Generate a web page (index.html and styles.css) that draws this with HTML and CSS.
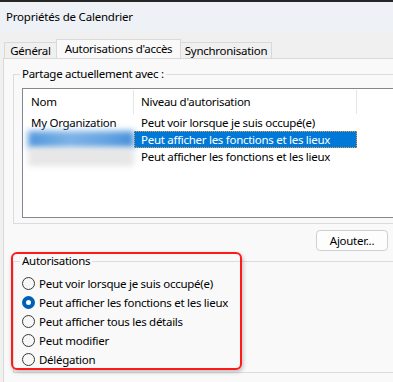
FILE: index.html
```html
<!DOCTYPE html>
<html>
	<head>
		<meta charset="utf-8"/>
		<title>Propriétés de Calendrier</title>
		<link rel="stylesheet" href="styles.css">
	</head>
	<body>
		<div class="window">
			<div class="titlebar">Propriétés de Calendrier</div>
			<div class="dialog">
				<div class="tabs">
					<div class="tab tab-general">Général</div>
					<div class="tab tab-access active">Autorisations d'accès</div>
					<div class="tab tab-sync">Synchronisation</div>
				</div>
				<div class="panel">
					<fieldset class="group">
						<legend>Partage actuellement avec :</legend>
						<div class="list">
							<div class="row head">
								<div class="cell name">Nom</div>
								<div class="cell level">Niveau d'autorisation</div>
							</div>
							<div class="row">
								<div class="cell name">My Organization</div>
								<div class="cell level">Peut voir lorsque je suis occupé(e)</div>
							</div>
							<div class="row">
								<div class="cell name"><span class="blur blur-blue"></span></div>
								<div class="cell level selected">Peut afficher les fonctions et les lieux</div>
							</div>
							<div class="row">
								<div class="cell name"><span class="blur blur-gray"></span></div>
								<div class="cell level">Peut afficher les fonctions et les lieux</div>
							</div>
						</div>
					</fieldset>
					<div class="actions">
						<button>Ajouter...</button>
					</div>
					<fieldset class="group perms">
						<legend>Autorisations</legend>
						<label class="radio"><span class="dot"></span>Peut voir lorsque je suis occupé(e)</label>
						<label class="radio"><span class="dot checked"></span>Peut afficher les fonctions et les lieux</label>
						<label class="radio"><span class="dot"></span>Peut afficher tous les détails</label>
						<label class="radio"><span class="dot"></span>Peut modifier</label>
						<label class="radio"><span class="dot"></span>Délégation</label>
					</fieldset>
					<div class="highlight"></div>
				</div>
			</div>
		</div>
	</body>
</html>
```

FILE: styles.css
```css
html, body {
	margin: 0;
	padding: 0;
}
body {
	width: 393px;
	height: 382px;
	overflow: hidden;
	font-family: 'Noto Sans', 'Segoe UI', sans-serif;
	font-size: 11.5px;
	letter-spacing: -0.28px;
	color: #000;
	background: #f0f0f0;
}
.window {
	border-top: 2px solid #262626;
	width: 430px;
}
.titlebar {
	height: 29px;
	line-height: 30px;
	padding-left: 6px;
	background: #eef2f7;
	letter-spacing: -0.2px;
}
.dialog {
	background: #f0f0f0;
	padding-top: 8px;
	height: 400px;
}
.tabs {
	display: flex;
	align-items: flex-end;
	padding-left: 4px;
	height: 19px;
}
.tab {
	box-sizing: border-box;
	height: 16px;
	line-height: 15px;
	border: 1px solid #d9d9d9;
	border-bottom: none;
	text-align: center;
	background: #f0f0f0;
	white-space: nowrap;
}
.tab-general { width: 52px; border-right: none; }
.tab-access { width: 125px; }
.tab-sync { width: 91px; border-left: none; }
.tab.active {
	height: 20px;
	line-height: 17px;
	background: #f9f9f9;
	position: relative;
	margin-bottom: -1px;
}
.panel {
	position: relative;
	box-sizing: border-box;
	width: 412px;
	height: 340px;
	margin-left: 3px;
	padding: 0 9px;
	border: 1px solid #d9d9d9;
	background: #f9f9f9;
}
.group {
	margin: 7px 0 0;
	padding: 6px 8px 5px;
	border: 1px solid #dcdcdc;
	min-width: 0;
}
.group legend {
	padding: 0 2px;
	margin-left: -2px;
	line-height: 16px;
}
.list {
	height: 130px;
	box-sizing: border-box;
	border: 1px solid #828790;
	background: #fff;
}
.row {
	display: flex;
	height: 17px;
	line-height: 17px;
	white-space: nowrap;
}
.row.head {
	height: 25px;
	line-height: 25px;
}
.cell {
	box-sizing: border-box;
	position: relative;
}
.cell.name {
	width: 111px;
	padding-left: 8px;
}
.cell.level {
	width: 223px;
	padding-left: 7px;
}
.head .cell {
	border-right: 1px solid #e5e5e5;
	height: 24px;
	margin-top: 1px;
	line-height: 23px;
}
.selected {
	background: #0078d7;
	color: #fff;
	outline: 1px dotted #e8a040;
	outline-offset: -1px;
}
.blur {
	position: absolute;
	left: 5px;
	right: 0;
	top: 0;
	bottom: 0;
	filter: blur(3px);
}
.blur-blue {
	top: 0;
	background: linear-gradient(90deg, #5197dd, #7db3e6 40%, #64a3e1 75%, #4590da);
}
.blur-gray {
	top: 1px;
	background: linear-gradient(180deg, #dadada, #eeeeee 50%, #d8d8d8);
}
.actions {
	display: flex;
	justify-content: flex-end;
	padding-right: 17px;
	margin-top: 6px;
}
.actions button {
	width: 72px;
	height: 21px;
	padding: 0;
	font: inherit;
	letter-spacing: inherit;
	color: #000;
	background: #fdfdfd;
	border: 1px solid #d0d0d0;
	border-radius: 4px;
}
.perms {
	margin-top: 2px;
	padding: 5px 8px 3px;
}
.radio {
	display: flex;
	align-items: center;
	height: 19px;
}
.dot {
	box-sizing: border-box;
	width: 13px;
	height: 13px;
	margin-right: 4px;
	border: 1px solid #3a3a3a;
	border-radius: 50%;
	background: #f7f7f7;
}
.dot.checked {
	border: 4px solid #005fb8;
	background: #fff;
}
.highlight {
	position: absolute;
	left: 7px;
	top: 193px;
	width: 231px;
	height: 118px;
	box-sizing: border-box;
	border: 2px solid #ff1a1a;
	border-radius: 6px;
	box-shadow: 1px 2px 4px rgba(0, 0, 0, 0.25);
}
```
